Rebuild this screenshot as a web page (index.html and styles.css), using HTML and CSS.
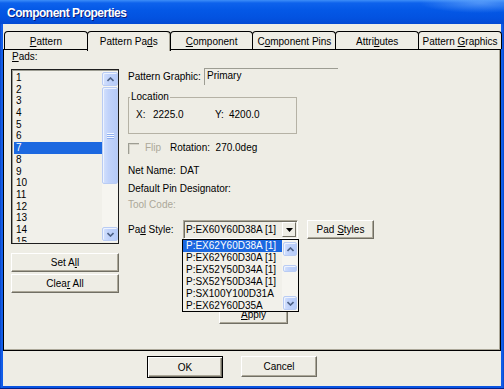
FILE: index.html
```html
<!DOCTYPE html>
<html lang="en">
<head>
  <meta charset="UTF-8">
  <title>Component Properties</title>
  <link rel="stylesheet" href="styles.css">
</head>
<body>

<div class="window">
  <div class="titlebar"><span class="title">Component Properties</span></div>

  <div class="client">
    <!-- Tab strip -->
    <div class="tabs">
      <div class="tab"><u>P</u>attern</div>
      <div class="tab active">Pattern Pa<u>d</u>s</div>
      <div class="tab"><u>C</u>omponent</div>
      <div class="tab">C<u>o</u>mponent Pins</div>
      <div class="tab">Attri<u>b</u>utes</div>
      <div class="tab">Pattern <u>G</u>raphics</div>
    </div>

    <div class="panel">
      <!-- Pads list -->
      <div class="left-col">
        <div class="pads-label"><u>P</u>ads:</div>
        <div class="listbox">
          <div class="items">
            <div class="item">1</div>
            <div class="item">2</div>
            <div class="item">3</div>
            <div class="item">4</div>
            <div class="item">5</div>
            <div class="item">6</div>
            <div class="item selected">7</div>
            <div class="item">8</div>
            <div class="item">9</div>
            <div class="item">10</div>
            <div class="item">11</div>
            <div class="item">12</div>
            <div class="item">13</div>
            <div class="item">14</div>
            <div class="item">15</div>
          </div>
          <div class="scrollbar">
            <div class="sb-btn"><svg width="7" height="5"><path d="M0.5 4 L3.5 1 L6.5 4" stroke="#4D6185" stroke-width="1.6" fill="none"/></svg></div>
            <div class="sb-thumb big"><svg width="7" height="7"><path d="M0 1.5h7M0 3.5h7M0 5.5h7" stroke="#F4F8FE" stroke-width="1"/><path d="M0 2.5h7M0 4.5h7M0 6.5h7" stroke="#8EAEF0" stroke-width="1"/></svg></div>
            <div class="sb-track"></div>
            <div class="sb-btn"><svg width="7" height="5"><path d="M0.5 1 L3.5 4 L6.5 1" stroke="#4D6185" stroke-width="1.6" fill="none"/></svg></div>
          </div>
        </div>
        <button class="btn side-btn set-all">Set A<u>l</u>l</button>
        <button class="btn side-btn clear-all">Clea<u>r</u> All</button>
      </div>

      <!-- Pad properties -->
      <div class="right-col">
        <div class="row graphic-row">
          <span class="lbl graphic-lbl">Pattern Graphic:</span>
          <span class="field">Primary</span>
        </div>

        <div class="group">
          <span class="group-label">Location</span>
          <div class="xy">
            <span class="x-lbl">X:</span><span class="x-val">2225.0</span>
            <span class="y-lbl">Y:</span><span>4200.0</span>
          </div>
        </div>

        <div class="row flip-row">
          <span class="checkbox"></span>
          <span class="flip disabled">Flip</span>
          <span>Rotation:&nbsp; 270.0deg</span>
        </div>

        <div class="row net-row">
          <span class="net-lbl">Net Name:</span><span>DAT</span>
        </div>
        <div class="row pin-row">Default Pin Designator:</div>
        <div class="row tool-row disabled">Tool Code:</div>

        <div class="row style-row">
          <span class="style-lbl">Pa<u>d</u> Style:</span>
          <div class="combo">
            <span class="combo-text">P:EX60Y60D38A [1]</span>
            <span class="combo-arrow"><svg width="7" height="4"><path d="M0 0h7L3.5 4z" fill="#000"/></svg></span>
            <div class="droplist">
              <div class="drop-items">
                <div class="drop-item selected">P:EX62Y60D38A [1]</div>
                <div class="drop-item">P:EX62Y60D30A [1]</div>
                <div class="drop-item">P:EX52Y50D34A [1]</div>
                <div class="drop-item">P:SX52Y50D34A [1]</div>
                <div class="drop-item">P:SX100Y100D31A</div>
                <div class="drop-item">P:EX62Y60D35A</div>
              </div>
              <div class="scrollbar small">
                <div class="sb-btn"><svg width="7" height="5"><path d="M0.5 4 L3.5 1 L6.5 4" stroke="#4D6185" stroke-width="1.6" fill="none"/></svg></div>
                <div class="sb-track"><div class="sb-thumb tiny"></div></div>
                <div class="sb-btn"><svg width="7" height="5"><path d="M0.5 1 L3.5 4 L6.5 1" stroke="#4D6185" stroke-width="1.6" fill="none"/></svg></div>
              </div>
            </div>
          </div>
          <button class="btn pad-styles">Pad <u>S</u>tyles</button>
        </div>

        <button class="btn apply"><u>A</u>pply</button>
      </div>
    </div>

    <!-- Dialog buttons -->
    <div class="footer">
      <button class="btn default">OK</button>
      <button class="btn">Cancel</button>
    </div>
  </div>
</div>

</body>
</html>
```

FILE: styles.css
```css
/* Global */
* {
  box-sizing: border-box;
}
body {
  margin: 0;
  font-family: "Liberation Sans", Arial, sans-serif;
  font-size: 10px;
  color: #000;
  background: #fff;
}
u {
  text-decoration: underline;
  text-underline-offset: 1px;
}
.disabled {
  color: #ACA899;
}

/* Window frame */
.window {
  width: 504px;
  height: 389px;
  display: flex;
  flex-direction: column;
  padding: 0 3px 3px;
  background: linear-gradient(to right, #0843C8, #1565F0 2px, #0A54E2 3px, #0A54E2 501px, #1565F0 502px, #0843C8);
  box-shadow: inset 0 -1px 0 #00208A;
}
.titlebar {
  height: 24px;
  margin: 0 -3px;
  padding-left: 7px;
  background:
    radial-gradient(ellipse 60px 10px at 480px 3px, rgba(120, 180, 255, 0.6), transparent),
    linear-gradient(to bottom, #3D8EF8 0, #0E62EC 3px, #0458E6 10px, #0352E0 18px, #0249D3 24px);
}
.title {
  font-size: 12px;
  font-weight: bold;
  line-height: 26px;
  letter-spacing: -0.5px;
  color: #fff;
  text-shadow: 1px 1px 0 #0A1A7A;
}
.client {
  flex: 1;
  display: flex;
  flex-direction: column;
  background: #EEEDE5;
  padding-top: 7px;
}

/* Tabs */
.tabs {
  display: flex;
  height: 18px;
  margin: 0 -1px 0 1px;
}
.tab {
  flex: 1;
  height: 18px;
  margin-left: -1px;
  padding-top: 2px;
  border: 1px solid #000;
  border-bottom: 0;
  border-radius: 4px 4px 0 0;
  line-height: 15px;
  text-align: center;
  white-space: nowrap;
  background: #EEEDE5;
}
.tab:first-child {
  margin-left: 0;
}
.tab.active {
  height: 20px;
  position: relative;
  z-index: 1;
  box-shadow: inset -1px 0 0 #ACA899;
}

/* Panel */
.panel {
  height: 302px;
  display: flex;
  padding: 1px 0 0 7px;
  border: 1px solid #000;
  box-shadow: inset -1px -1px 0 #ACA899;
}
.left-col {
  width: 108px;
  display: flex;
  flex-direction: column;
}
.pads-label {
  line-height: 12px;
  padding-left: 1px;
}
.listbox {
  height: 175px;
  margin-top: 6px;
  display: flex;
  padding: 1px 0 1px 1px;
  border: 1px solid #1E1E1E;
  box-shadow: inset 1px 1px 0 #9D9D93;
  background: #F1F0EA;
}
.items {
  width: 89px;
  padding-top: 1px;
  overflow: hidden;
}
.item {
  height: 11.7px;
  line-height: 11.7px;
  margin-left: 1px;
  padding-left: 2px;
}
.item.selected,
.drop-item.selected {
  background: #1C68E0;
  color: #fff;
}

/* Scrollbars */
.scrollbar {
  width: 16px;
  display: flex;
  flex-direction: column;
  padding: 1px 0;
  background: #F6F5F0;
}
.sb-btn,
.sb-thumb {
  border: 1px solid #B9CCF4;
  border-radius: 2px;
  background: linear-gradient(to right, #D4E1FC, #C1D3FB 40%, #B6CBF8);
  box-shadow: inset 1px 1px 0 #EEF3FE;
  display: flex;
  align-items: center;
  justify-content: center;
}
.sb-btn {
  height: 14px;
}
.sb-thumb.big {
  height: 97px;
  margin-top: 1px;
}
.sb-track {
  flex: 1;
}
.scrollbar.small {
  width: 16px;
  padding: 2px 1px 1px 1px;
}
.scrollbar.small .sb-track {
  padding-top: 9px;
}
.sb-thumb.tiny {
  height: 7px;
}

/* Buttons */
.btn {
  font: inherit;
  color: #000;
  padding: 0;
  background: #EEEDE5;
  border: 1px solid;
  border-color: #fff #716F64 #716F64 #fff;
  box-shadow: inset -1px -1px 0 #ACA899;
  cursor: pointer;
}
.side-btn {
  height: 19px;
}
.set-all {
  margin-top: 9px;
}
.clear-all {
  margin-top: 2px;
}

/* Right column */
.right-col {
  flex: 1;
  margin-left: 9px;
  display: flex;
  flex-direction: column;
  align-items: flex-start;
}
.row {
  display: flex;
  align-items: center;
  line-height: 12px;
  white-space: nowrap;
}
.graphic-row {
  height: 17px;
  margin-top: 17px;
}
.graphic-lbl {
  width: 76px;
}
.field {
  width: 134px;
  height: 17px;
  padding-left: 2px;
  line-height: 14px;
  border-top: 1px solid #9D9D93;
  border-left: 1px solid #9D9D93;
}
.group {
  position: relative;
  width: 169px;
  height: 37px;
  margin-top: 12px;
  padding: 11px 0 0 7px;
  border: 1px solid #B5B2A5;
}
.group-label {
  position: absolute;
  top: -7px;
  left: 1px;
  padding: 0 1px;
  line-height: 12px;
  background: #EEEDE5;
}
.xy {
  display: flex;
  line-height: 12px;
}
.x-lbl {
  width: 17px;
}
.x-val {
  width: 62px;
}
.y-lbl {
  width: 14px;
}
.flip-row {
  margin-top: 8px;
}
.checkbox {
  width: 11px;
  height: 11px;
  border-top: 1px solid #9D9D93;
  border-left: 1px solid #9D9D93;
  box-shadow: inset 1px 1px 0 #D6D4CA;
}
.flip {
  width: 25px;
  margin-left: 6px;
}
.net-row {
  margin-top: 11px;
}
.net-lbl {
  width: 52px;
}
.pin-row {
  margin-top: 6px;
}
.tool-row {
  margin-top: 4px;
}
.style-row {
  margin-top: 9px;
}
.style-lbl {
  width: 55px;
}

/* Pad style combo */
.combo {
  position: relative;
  width: 115px;
  height: 19px;
  display: flex;
  align-items: center;
  border: 1px solid;
  border-color: #ACA899 #fff #fff #ACA899;
  box-shadow: inset 1px 1px 0 #716F64;
}
.combo-text {
  flex: 1;
  padding-left: 2px;
  line-height: 15px;
}
.combo-arrow {
  width: 14px;
  height: 15px;
  margin-right: 1px;
  display: flex;
  align-items: center;
  justify-content: center;
  border: 1px solid;
  border-color: #fff #716F64 #716F64 #fff;
}
.droplist {
  position: absolute;
  top: calc(100% + 1px);
  left: -2px;
  z-index: 2;
  width: 117px;
  height: 73px;
  display: flex;
  border: 1px solid #000;
  background: #F1F0EA;
}
.drop-items {
  width: 99px;
  overflow: hidden;
}
.drop-item {
  height: 12px;
  line-height: 12px;
  padding-left: 3px;
  white-space: nowrap;
  overflow: hidden;
}
.pad-styles {
  width: 67px;
  height: 19px;
  margin-left: 9px;
}
.apply {
  width: 69px;
  height: 19px;
  margin: 66px 0 0 91px;
}

/* Footer buttons */
.footer {
  display: flex;
  align-items: flex-start;
  gap: 18px;
  padding: 5px 0 0 144px;
}
.footer .btn {
  width: 76px;
  height: 21px;
}
.footer .btn.default {
  height: 22px;
  border: 1px solid #000;
  box-shadow: inset 1px 1px 0 #fff, inset -1px -1px 0 #716F64, inset -2px -2px 0 #ACA899;
}
```
